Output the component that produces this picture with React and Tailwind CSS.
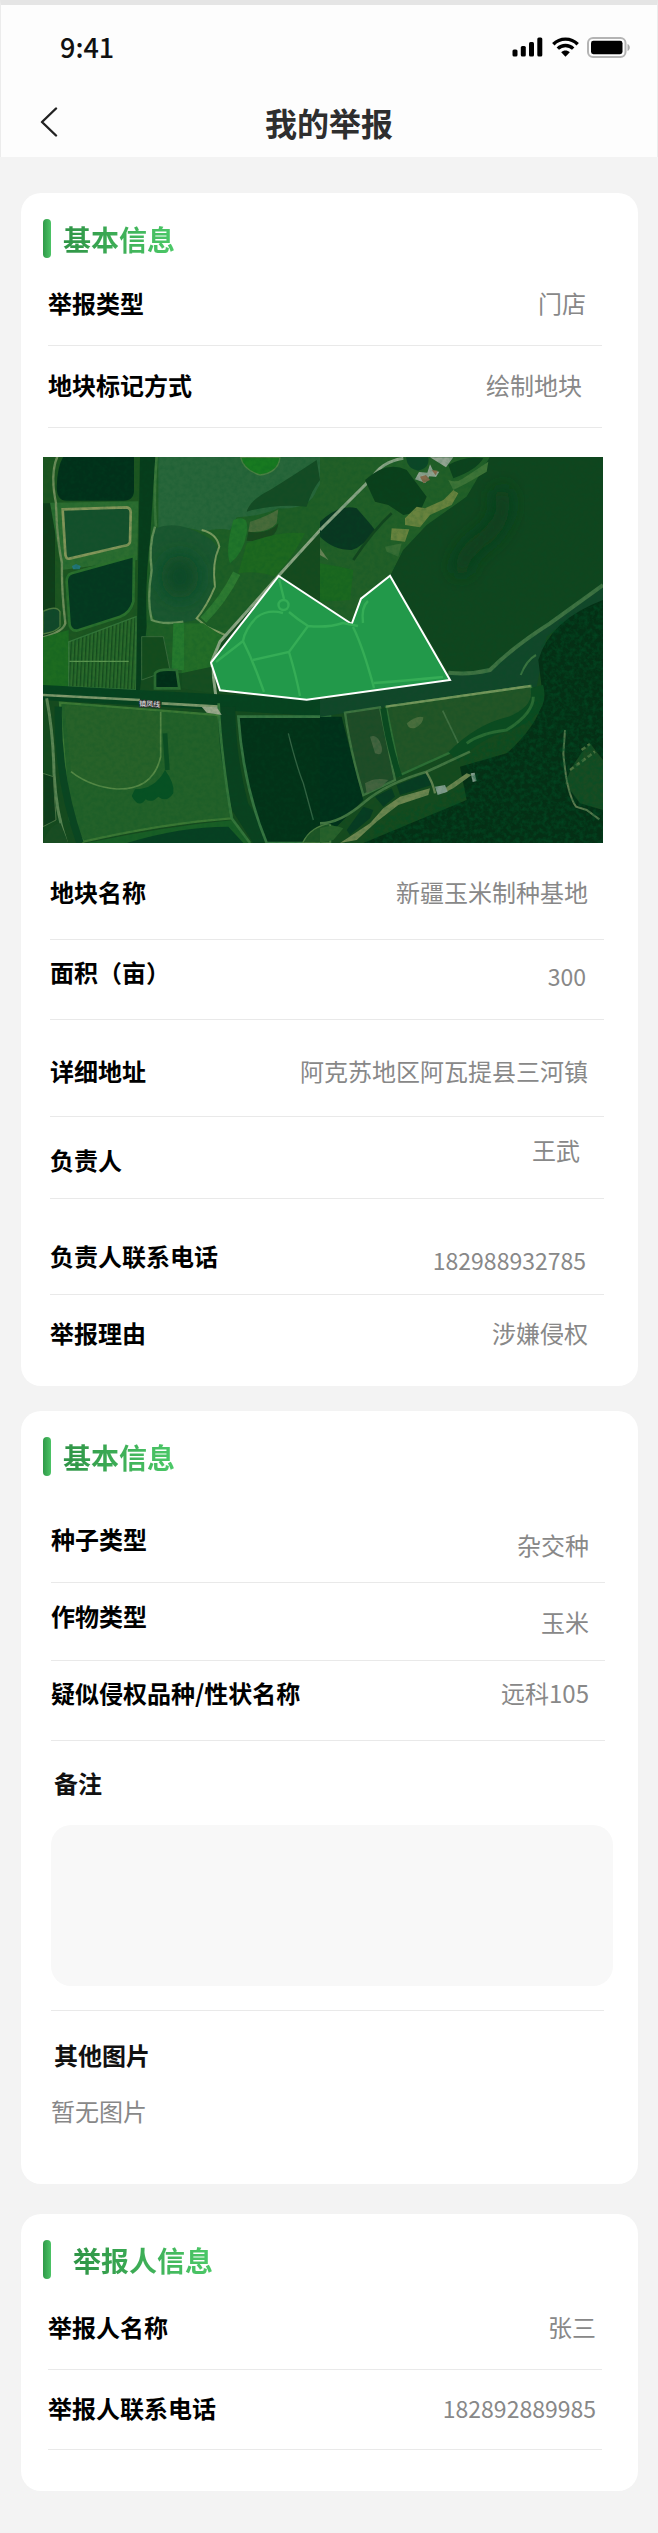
import React from "react";

const sectionTitle =
  "bg-gradient-to-r from-[#2f9446] to-[#4cc968] bg-clip-text text-[28px] leading-[38px] font-bold text-transparent";

function StatusBar() {
  return (
    <div className="flex items-center justify-between pt-[27px] pr-[26px] pl-[59px]">
      <span className="text-[27px] leading-[30px] font-medium text-[#111]">9:41</span>
      <div className="flex items-center gap-2">
        <svg className="h-5 w-8" viewBox="0 0 32 20" aria-hidden="true">
          <rect x="0.5" y="12.5" width="5" height="7" rx="1.5" />
          <rect x="8.8" y="9" width="5" height="10.5" rx="1.5" />
          <rect x="17" y="5" width="5" height="14.5" rx="1.5" />
          <rect x="25.3" y="0.5" width="5" height="19" rx="1.5" />
        </svg>
        <svg className="h-5 w-[27px]" viewBox="0 0 27 20" aria-hidden="true">
          <g fill="none" stroke="#000" strokeWidth="3.4">
            <path d="M1.3 7.2 C8 0.4 19 0.4 25.7 7.2" />
            <path d="M5.8 11.6 C10 7.4 17 7.4 21.2 11.6" />
          </g>
          <path d="M9.2 15.2 C11.6 12.9 15.4 12.9 17.8 15.2 L13.5 19.8 Z" />
        </svg>
        <svg className="h-[21px] w-11" viewBox="0 0 44 21" aria-hidden="true">
          <rect x="1" y="1" width="37.5" height="19" rx="5" fill="#fdfdfd" stroke="#b4b4b4" strokeWidth="2" />
          <rect x="4" y="3.8" width="31.5" height="13.4" rx="2.4" />
          <path d="M40.5 7 C43.6 8.2 43.6 12.8 40.5 14 Z" fill="#aaa" />
        </svg>
      </div>
    </div>
  );
}

function Header() {
  return (
    <header className="border-x border-t-[5px] border-x-[#ececec] border-t-[#e5e5e5] bg-[#fdfdfd] pb-[11px]">
      <StatusBar />
      <div className="mt-9 grid grid-cols-[1fr_auto_1fr] items-center px-[35px]">
        <button type="button" aria-label="返回" className="flex h-12 w-8 items-center">
          <svg className="h-[30px] w-6" viewBox="0 0 24 30" fill="none" stroke="#222" strokeWidth="2.4" strokeLinecap="round" strokeLinejoin="round">
            <path d="M20 1.5 L6 15 L20 28.5" />
          </svg>
        </button>
        <h1 className="text-[32px] leading-[48px] font-bold text-[#2e2e2e]">我的举报</h1>
      </div>
    </header>
  );
}

function Section({ title, titleGap = "gap-3", className, children }) {
  return (
    <section className={`rounded-[20px] bg-white pt-[26px] ${className}`}>
      <div className={`flex items-center pl-[22px] ${titleGap}`}>
        <span className="h-[39px] w-2 rounded-full bg-gradient-to-r from-[#2f9a48] to-[#4cc366]" />
        <h2 className={sectionTitle}>{title}</h2>
      </div>
      {children}
    </section>
  );
}

const alignments = {
  center: "self-center",
  low: "self-end",
  high: "self-start",
};

function Row({ label, value, numeric = false, align = "center", inner = "h-6", last = false, className }) {
  const labelAlign = align === "low" ? "self-start" : align === "high" ? "self-end" : "self-center";
  return (
    <div className={`${last ? "" : "border-b border-[#e9e9e9]"} ${className}`}>
      <dl className={`flex justify-between ${inner}`}>
        <dt className={`text-[24px] leading-6 font-bold whitespace-nowrap text-black ${labelAlign}`}>{label}</dt>
        <dd className={`leading-6 whitespace-nowrap text-[#888] ${numeric ? "text-[23px]" : "text-[24px]"} ${alignments[align]}`}>
          {value}
        </dd>
      </dl>
    </div>
  );
}

const road = "#6f8d5a";

function PlotMap() {
  return (
    <svg className="block w-full" viewBox="0 0 560 386" role="img" aria-label="地块卫星地图">
      <defs>
        <filter id="grain" x="0" y="0" width="100%" height="100%">
          <feTurbulence type="fractalNoise" baseFrequency="0.22" numOctaves="3" seed="4" />
          <feColorMatrix values="0 0 0 0 0  0 0 0 0 0.08  0 0 0 0 0.02  0 1.8 0 0 -0.65" />
        </filter>
        <filter id="soft" x="-50%" y="-50%" width="200%" height="200%">
          <feGaussianBlur stdDeviation="26" />
        </filter>
        <clipPath id="frame">
          <rect width="560" height="386" />
        </clipPath>
        <clipPath id="forest">
          <path d="M560 145 L520 160 L498 190 L502 232 L480 265 L420 300 L430 325 L390 345 L340 360 L318 386 L560 386 Z" />
        </clipPath>
        <pattern id="crop" width="11" height="20" patternUnits="userSpaceOnUse" patternTransform="rotate(3)">
          <rect width="11" height="20" fill="#2b6b2b" />
          <rect width="4" height="20" fill="#164a1d" />
        </pattern>
      </defs>
      <g clipPath="url(#frame)">
        <rect width="560" height="386" fill="#164a1e" />

        {/* west half: ponds, paddies and farm roads */}
        <g transform="translate(-13 -17) scale(0.33333)">
          <path d="M380 50 H900 V240 L745 408 L560 620 L540 700 H340 L340 300 Z" fill="#1f5e25" />
          <path d="M39 50 H330 V760 H39 Z" fill="#1d5520" />
          <path d="M39 190 H75 V590 H39 Z" fill="#103d19" />
          <path d="M100 50 H312 V150 Q312 182 280 182 H110 Q80 182 80 140 Q82 80 100 50 Z" fill="#02301a" />
          <path d="M60 188 L325 184 L322 360 L95 390 Z" fill="#2c6d30" />
          <path d="M98 208 L290 202 Q304 204 302 222 L300 305 Q298 316 280 318 L118 356 Q106 358 106 340 Z" fill="#15502c" stroke="#84965a" strokeWidth="8" />
          <path d="M125 400 L312 348 L310 485 Q300 520 270 530 L140 572 Q118 572 118 545 L110 425 Q110 405 125 400 Z" fill="#053820" stroke="#2b702d" strokeWidth="8" />
          <path d="M126 378 l12 -6 l14 6 l-3 10 h-20 Z" fill="#23777c" />
          <path d="M82 50 Q60 100 78 190 Q80 290 96 370 Q94 450 106 550 Q100 575 39 592" fill="none" stroke={road} strokeWidth="7" />
          <path d="M39 514 Q80 495 90 515 V560 Q80 575 39 582 Z" fill="#12482a" stroke="#527b40" strokeWidth="4" />
          <path d="M39 592 L116 570 V745 L39 735 Z" fill="#1d6b20" />
          <path d="M116 606 L318 530 V750 L116 740 Z" fill="url(#crop)" stroke="#35763a" strokeWidth="4" />
          <path d="M118 664 H296" stroke="#5d9650" strokeWidth="4" />
          <path d="M330 50 H376 L360 300 Q345 420 350 560 L330 750 H318 Z" fill="#073c1b" />
          <path d="M380 50 Q370 180 378 260" fill="none" stroke="#3a763a" strokeWidth="8" />
          <path d="M385 50 H870 Q900 90 860 150 Q840 210 745 205 Q690 230 620 232 L600 270 Q560 262 520 275 Q440 250 385 275 Z" fill="#28663a" />
          <path d="M860 60 Q800 100 720 150 Q660 180 650 215 Q740 190 830 200 Q845 150 870 120 Z" fill="#154b24" />
          <path d="M378 265 Q440 240 520 285 Q570 310 560 340 Q545 380 550 440 Q530 490 500 540 Q430 555 380 545 Q350 520 362 400 Q355 300 378 265 Z" fill="#1b5730" />
          <ellipse cx="450" cy="410" rx="55" ry="65" fill="#0f4827" filter="url(#soft)" />
          <path d="M375 260 Q355 320 365 390 Q350 480 365 540 Q400 555 460 545" fill="none" stroke="#66915a" strokeWidth="7" />
          <path d="M515 270 Q560 280 568 320 Q545 370 555 440 Q530 500 500 535 L530 560 L585 585" fill="none" stroke="#7d9b61" strokeWidth="6" />
          <path d="M632 52 Q640 90 690 105 Q745 98 750 52 Z" fill="#187a20" stroke="#4c8143" strokeWidth="4" />
          <path d="M610 240 Q660 220 650 280 Q640 340 600 370 Q585 330 610 240 Z" fill="#21752a" />
          <path d="M660 245 Q710 230 745 208 L740 250 Q715 280 655 275 Z" fill="#496b3a" />
          <path d="M655 275 Q715 285 745 250 Q740 310 650 302 Z" fill="#1a471d" />
          <path d="M650 310 Q750 270 825 280 Q790 350 735 410 Q680 390 625 400 Z" fill="#1e681f" />
          <path d="M620 400 Q580 480 520 540" fill="none" stroke="#2e7a31" strokeWidth="24" />
          <path d="M455 550 L520 550 L580 590 L550 680 L455 700 Z" fill="#246d27" />
          <path d="M430 550 H462 V690 H425 Z" fill="#26792d" />
          <path d="M335 590 L400 590 L420 690 L335 720 Z" fill="#154b1d" stroke="#38693b" strokeWidth="3" />
          <path d="M900 238 L745 408 L570 605 L545 665 L560 790" fill="none" stroke="#8ca583" strokeWidth="9" />
          <path d="M375 700 Q385 685 440 690 L448 745 H375 Z" fill="#022d18" stroke="#2c6c32" strokeWidth="8" />
          <path d="M455 700 L545 680 V760 L455 745 Z" fill="#174d20" />

          <path d="M39 735 L900 780 V830 L39 780 Z" fill="#07421f" />
          <path d="M39 765 L330 780 M395 790 L565 800" stroke="#80996d" strokeWidth="8" />
          <path d="M90 788 L565 825 L605 1135 Q400 1150 160 1205 L120 1140 Q105 1000 90 788 Z" fill="#236129" stroke="#3c7834" strokeWidth="7" />
          <path d="M103 795 L392 815 V950 Q370 1050 260 1047 Q180 1040 123 995 Z" fill="#286229" />
          <path d="M392 815 V950 Q370 1050 260 1047 Q180 1040 123 995" fill="none" stroke="#578946" strokeWidth="5" />
          <path d="M405 880 L412 990" stroke="#0c4d22" strokeWidth="14" />
          <path d="M405 990 q30 40 25 70 q-20 30 -45 10 q-20 20 -38 8 q-20 30 -42 -10 l10 -20 q60 0 90 -58 Z" fill="#075123" />
          <path d="M50 775 Q70 880 72 1000 Q78 1120 110 1209" fill="none" stroke="#5c8554" strokeWidth="9" />
          <path d="M85 800 Q80 1010 150 1209" fill="none" stroke="#0b4521" strokeWidth="22" />
          <path d="M39 1000 L70 1010 L78 1140 L39 1160 Z" fill="#103d1b" stroke="#4f7546" strokeWidth="3" />
          <path d="M39 1209 Q60 1150 92 1150 L115 1209 Z" fill="#1a4c22" />
          <path d="M170 1209 Q400 1160 610 1140 L660 1209 Z" fill="#195e25" />
          <path d="M290 1209 Q450 1160 595 1160 L640 1209 Z" fill="#073f22" />
          <path d="M590 800 Q590 950 630 1100 L700 1209" fill="none" stroke="#0a411f" strokeWidth="52" />
          <path d="M566 790 Q570 920 605 1135 L660 1209" fill="none" stroke="#34753a" strokeWidth="8" />
          <path d="M625 830 H900 V1209 H710 Q640 1040 625 830 Z" fill="#033218" stroke="#367541" strokeWidth="8" />
          <path d="M775 880 Q800 980 820 1030 L850 1140" fill="none" stroke="#346344" strokeWidth="4" />
          <path d="M818 1209 Q840 1160 900 1150 V1209 Z" fill="#1e5525" stroke="#4f7d43" strokeWidth="4" />
          <path d="M515 800 L560 800 L575 825 L530 818 Z" fill="#9ca98c" />
        </g>

        {/* east half: lake, village, channel and woods */}
        <g transform="translate(277 -17) scale(0.33333)">
          <path d="M0 50 H520 L440 170 L320 260 L250 330 L212 405 L95 550 L0 490 Z" fill="#225f27" />
          <path d="M510 50 H849 V430 Q760 500 690 550 Q580 630 510 690 Q440 710 385 695 L212 405 L250 330 L320 255 L440 170 Z" fill="#10451e" />
          <path d="M540 150 Q570 220 500 290 Q430 330 420 400" fill="none" stroke="#0c3e1b" strokeWidth="44" filter="url(#soft)" />
          <path d="M0 245 Q60 190 110 205 Q150 250 165 270 Q130 320 95 330 Q40 330 0 290 Z" fill="#093721" />
          <path d="M0 270 L155 115 Q185 65 250 55" fill="none" stroke="#8ba586" strokeWidth="9" />
          <path d="M135 120 Q200 60 260 90 L320 170 L300 215 L250 225 L205 195 L165 185 Z" fill="#0b3f1b" />
          <path d="M258 52 H325 Q330 85 295 92 Q262 88 258 52 Z" fill="#0c4627" />
          <path d="M385 75 Q440 45 490 55 Q470 90 400 115 Z" fill="#0d421d" />
          <path d="M285 118 l12 -22 l25 2 l8 -25 l10 20 l18 2 l-10 16 l-20 -2 l-12 20 Z M330 52 h70 l-22 30 Z" fill="#92a391" />
          <path d="M300 110 l18 -5 l12 15 l-20 10 Z M335 90 l18 2 l-6 14 Z" fill="#866b4b" />
          <path d="M255 235 L290 200 L315 205 L370 180 L400 150 L415 160 L395 195 L330 225 L300 262 L255 255 Z M215 265 L268 268 L255 305 L212 300 Z" fill="#69833e" />
          <path d="M385 120 Q410 130 430 115 L505 65 L500 95 L440 130 L400 150 Z" fill="#3e7437" />
          <path d="M195 320 L245 310 L235 350 L200 335 Z" fill="#376d34" />
          <path d="M100 360 Q160 270 215 220" fill="none" stroke="#13451e" strokeWidth="8" />
          <path d="M0 325 L25 360 L0 345 Z" fill="#688256" />
          <path d="M0 370 Q60 380 100 390 L90 480 L0 485 Z" fill="#1b681f" />
          <path d="M385 700 Q450 710 510 690 Q580 620 690 550 L849 430 V490 Q760 520 680 590 L650 740 L200 800 L0 830 V780 L390 720 Z" fill="#12472a" />
          <path d="M385 698 Q450 705 510 690 Q580 620 690 550 L849 435" fill="none" stroke="#3f7242" strokeWidth="12" />
          <path d="M602 705 Q620 660 648 645" fill="none" stroke="#3b7440" strokeWidth="6" />
          <path d="M849 480 Q690 540 655 660 L670 780 Q650 860 560 940 L420 980 L440 1080 L130 1209 H849 Z" fill="#052f15" />
          <path d="M0 830 L65 830 Q90 930 130 1080 L50 1160 L0 1140 Z" fill="#01301a" />
          <path d="M75 818 L180 802 L225 1020 L130 1065 Q90 930 75 818 Z" fill="#204c27" stroke="#3f7440" strokeWidth="7" />
          <path d="M150 890 q25 -10 35 30 q5 30 -20 20 Z M135 1030 q30 -20 70 -10 l-20 20 l-45 20 Z" fill="#44633f" />
          <path d="M198 800 L632 738 Q650 790 600 830 L430 920 L240 1005 Z" fill="#235526" stroke="#2f7036" strokeWidth="7" />
          <path d="M198 800 L632 738" stroke="#77975c" strokeWidth="7" />
          <path d="M190 805 Q205 910 238 1010" fill="none" stroke="#0b4a20" strokeWidth="18" />
          <path d="M260 850 q30 -25 50 -18 q0 20 -25 32 q-20 5 -25 -14 Z" fill="#4a6e3d" />
          <path d="M368 812 L415 910" stroke="#417042" strokeWidth="5" />
          <path d="M650 740 Q670 810 570 850 Q480 870 400 950" fill="none" stroke="#0c4b20" strokeWidth="40" />
          <path d="M640 770 Q640 820 560 870 Q480 880 440 910" fill="none" stroke="#2a6b33" strokeWidth="9" />
          <path d="M0 1150 Q60 1150 135 1085 Q200 1030 320 995 L450 935" fill="none" stroke="#447642" strokeWidth="8" />
          <path d="M230 1035 L320 1000 L335 1035 L240 1065 Z M80 1170 L130 1100 L160 1110 L150 1135 L90 1185 Z M165 1070 L215 1045 L225 1070 L190 1100 Z" fill="#083b22" />
          <path d="M0 1209 L0 1165 Q40 1150 70 1165 L40 1200 Z" fill="#29612b" />
          <path d="M60 1209 L150 1150 L190 1105 L240 1070 L330 1045 L325 1065 L235 1095 L170 1145 L110 1200 Z M375 1045 L440 1000 L455 1005 L400 1045 L370 1060 Z" fill="#6e8650" />
          <path d="M318 995 Q340 1030 345 1060" fill="none" stroke="#658452" strokeWidth="7" />
          <path d="M345 1040 l30 -5 l8 20 l-30 10 Z M452 1000 l12 -2 l6 25 l-12 3 Z" fill="#819c8c" />
          <path d="M735 1030 Q760 960 810 910 L849 960 V1110 L780 1090 Z" fill="#194b22" />
          <path d="M735 870 L730 940 Q740 1060 768 1100 L800 1110 L838 1138" fill="none" stroke="#5e7b50" strokeWidth="6" />
          <path d="M750 990 L825 935 M785 930 L810 912" stroke="#507441" strokeWidth="8" strokeDasharray="14 8" />
        </g>

        <rect width="560" height="386" filter="url(#grain)" opacity="0.22" />
        <g clipPath="url(#forest)">
          <rect width="560" height="386" filter="url(#grain)" opacity="0.6" />
        </g>

        {/* marked plot */}
        <path d="M235.7 119 L168 205.7 L177 233.3 L263.7 242.7 L407 223 L347 118.7 L318 141.7 L308.7 167 Z" fill="#22994a" stroke="#fff" strokeWidth="2" />
        <g fill="none" stroke="#35ad56" strokeWidth="2.4">
          <path d="M236 122 L241 142 M240 156 Q225 152 214 160 Q202 172 200 184 L173 205 M200 184 Q208 200 214 216 L221 235" />
          <circle cx="240.5" cy="148" r="5" />
          <path d="M246 155 Q254 162 265 169 Q285 171 300 166 L315 169 M265 169 L246 195 L210 203 M246 195 Q253 218 257 239" />
          <path d="M310 170 Q320 190 331 231 M320 166 Q318 150 325 144 M331 226 Q360 224 400 220" />
        </g>
        <text x="96" y="249" transform="rotate(3 96 249)" fontSize="7" fill="#f2f2f2" stroke="#333" strokeWidth="1.5" paintOrder="stroke">
          镇凤线
        </text>
      </g>
    </svg>
  );
}

export default function App() {
  return (
    <div className="min-h-screen bg-[#f3f3f3] pb-[42px] font-['Noto_Sans_CJK_SC','Noto_Sans',sans-serif]">
      <Header />
      <main className="flex flex-col pt-9 pr-5 pl-[21px]">
        <Section title="基本信息">
          <div className="pr-[36px] pl-[27px]">
            <Row label="举报类型" value="门店" className="pt-[33px] pr-4 pb-[30px]" />
            <Row label="地块标记方式" value="绘制地块" className="pt-[27px] pr-5 pb-[30px]" />
          </div>
          <div className="pt-[29px] pr-[35px] pl-[22px]">
            <PlotMap />
          </div>
          <div className="pr-[34px] pl-[29px]">
            <Row label="地块名称" value="新疆玉米制种基地" className="pt-[37px] pr-4 pb-[35px]" />
            <Row label="面积（亩）" value="300" numeric align="low" inner="h-7" className="pt-5 pr-[18px] pb-[31px]" />
            <Row label="详细地址" value="阿克苏地区阿瓦提县三河镇" className="pt-[39px] pr-4 pb-[33px]" />
            <Row label="负责人" value="王武" align="high" inner="h-[34px]" className="pt-[21px] pr-6 pb-[26px]" />
            <Row label="负责人联系电话" value="182988932785" numeric align="low" inner="h-7" className="pt-[45px] pr-[18px] pb-[22px]" />
            <Row label="举报理由" value="涉嫌侵权" last className="pt-[26px] pr-4 pb-[41px]" />
          </div>
        </Section>

        <Section title="基本信息" className="mt-[25px]">
          <div className="pr-[33px] pl-[30px]">
            <Row label="种子类型" value="杂交种" align="low" inner="h-[30px]" className="pt-[51px] pr-4 pb-[25px]" />
            <Row label="作物类型" value="玉米" align="low" inner="h-[30px]" className="pt-[21px] pr-4 pb-[26px]" />
            <Row label="疑似侵权品种/性状名称" value="远科105" className="pt-5 pr-4 pb-[35px]" />
          </div>
          <div className="flex flex-col gap-[30px] pt-[30px] pr-[25px] pl-[30px]">
            <label htmlFor="remark" className="pl-[3px] text-[24px] leading-6 font-bold text-[#111]">
              备注
            </label>
            <textarea id="remark" readOnly className="block h-[161px] w-full resize-none rounded-[20px] bg-[#f8f8f8] p-4 text-[24px] text-[#888] outline-none" />
          </div>
          <div className="mt-6 mr-[34px] ml-[30px] border-t border-[#e9e9e9] pt-8 pb-[61px]">
            <h3 className="pl-[3px] text-[24px] leading-6 font-bold text-[#111]">其他图片</h3>
            <p className="mt-8 text-[24px] leading-6 text-[#888]">暂无图片</p>
          </div>
        </Section>

        <Section title="举报人信息" titleGap="gap-[22px]" className="mt-[30px] pb-[41px]">
          <div className="pr-[36px] pl-[27px]">
            <Row label="举报人名称" value="张三" className="pt-9 pr-[6px] pb-[30px]" />
            <Row label="举报人联系电话" value="182892889985" numeric className="pt-[26px] pr-[6px] pb-[29px]" />
          </div>
        </Section>
      </main>
    </div>
  );
}
